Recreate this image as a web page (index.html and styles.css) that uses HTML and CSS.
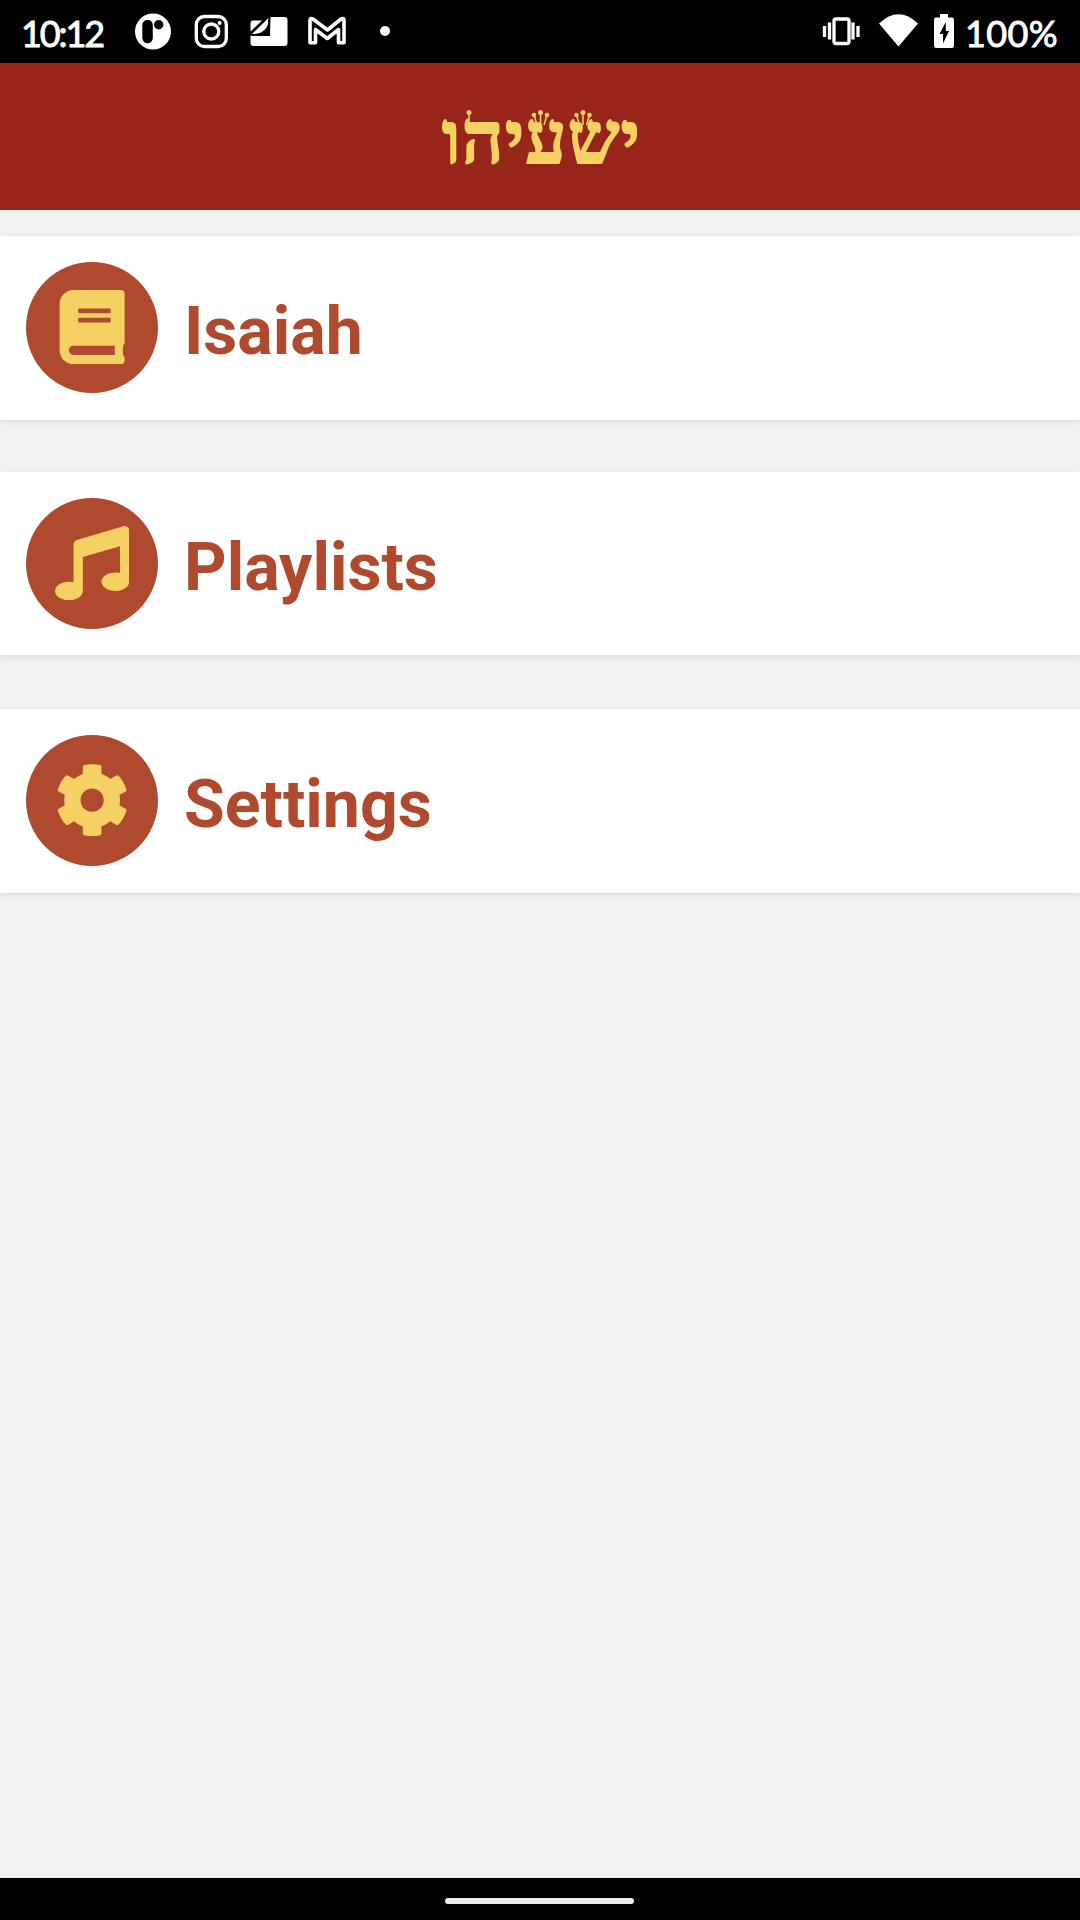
FILE: index.html
```html
<!DOCTYPE html>
<html lang="en">
<head>
<meta charset="utf-8">
<title>Isaiah</title>
<link rel="stylesheet" href="styles.css">
</head>
<body>
<div class="status">
  <span class="clock">10:12</span>
  <svg class="notifications" width="270" height="63" viewBox="0 0 270 63">
    <path fill="#fff" fill-rule="evenodd" d="M23 13.500a18 18 0 1 1 0 36a18 18 0 1 1 0-36zM17.300 20a5 5 0 0 0-5 5v13a5 5 0 0 0 10.500 0v-13a5 5 0 0 0-5.500-5zM28.700 20a4.700 4.700 0 1 0 0 9.400a4.700 4.700 0 1 0 0-9.400z"/>
    <g fill="none" stroke="#fff" stroke-width="3.300">
      <rect x="66.300" y="16.500" width="30" height="30" rx="8"/>
      <circle cx="81.300" cy="31.500" r="7.500"/>
    </g>
    <circle cx="89.600" cy="23" r="2" fill="#fff"/>
    <path fill="#fff" d="M140.500 17h14q3 0 3 3v23q0 3-3 3h-31q-3 0-3-3v-7.200h19.500z"/>
    <path fill="#fff" d="M120.500 31.500v-8.500q0-2.500 2.500-2.500h9z"/>
    <path fill="#fff" d="M122 34L138.500 18q.5 10.500-7.500 14.500-3.500 1.500-9 1.500z"/>
    <path fill="#000" d="M138 20q1.500 9-6 12.800-3 1.400-8.500 1.700l-1.500 1.500h18V19z"/>
    <path fill="none" stroke="#fff" stroke-width="3.600" stroke-linejoin="round" d="M180 42.700V20.500q0-3 3-1.500l14.500 11L211 19q3-1.500 3 1.500v22.200h-5.500V29.500L197.300 38.500L185.500 29.500v13.200z"/>
    <circle cx="255" cy="31" r="5" fill="#fff"/>
  </svg>
  <svg class="system" width="140" height="63" viewBox="0 0 140 63">
    <rect x="14" y="19" width="15" height="24.500" rx="2" fill="none" stroke="#fff" stroke-width="3.300"/>
    <path stroke="#fff" stroke-width="3.300" d="M4.500 26v11M9.500 22.500v17M33 22.500v17M38 26v11"/>
    <path fill="#fff" d="M59 23.500Q78.500 5 98 23.500L78.500 46.500z"/>
    <path fill="#fff" d="M120 14h8v3.500h4q2 0 2 2V46q0 2-2 2h-16q-2 0-2-2V19.500q0-2 2-2h4z"/>
    <path fill="#000" d="M125.800 22L119.500 34H123V43.500L129 31h-3.200z"/>
  </svg>
  <span class="level">100%</span>
</div>
<header class="header">
  <h1 class="title" lang="he" dir="rtl">ישעיהו</h1>
  <svg class="crowns" width="220" height="90" viewBox="430 95 220 90">
    <path fill="none" stroke="#f4d162" stroke-width="1.500" d="M469 113v12M534 115l3 10M540.500 112v13M547 115l-3 10M576.500 115l3 10M583 112v13M589.500 115l-3 10"/>
    <g fill="#f4d162">
      <circle cx="469" cy="112.500" r="2.500"/>
      <circle cx="534" cy="115" r="2.300"/><circle cx="540.500" cy="112.500" r="2.500"/><circle cx="547" cy="115" r="2.300"/>
      <circle cx="576.500" cy="115" r="2.300"/><circle cx="583" cy="112.500" r="2.500"/><circle cx="589.500" cy="115" r="2.300"/>
    </g>
  </svg>
</header>
<main class="menu">
  <a class="item">
    <span class="badge"><svg class="icon" viewBox="-32 0 512 512"><path d="M448 360V24c0-13.300-10.700-24-24-24H96C43 0 0 43 0 96v320c0 53 43 96 96 96h328c13.300 0 24-10.700 24-24v-16c0-7.500-3.500-14.300-8.900-18.700-4.200-15.400-4.200-59.300 0-74.700 5.400-4.300 8.900-11.100 8.900-18.600zM128 134c0-3.300 2.700-6 6-6h212c3.300 0 6 2.700 6 6v20c0 3.300-2.700 6-6 6H134c-3.300 0-6-2.700-6-6v-20zm0 64c0-3.300 2.700-6 6-6h212c3.300 0 6 2.700 6 6v20c0 3.300-2.700 6-6 6H134c-3.300 0-6-2.700-6-6v-20zm253.400 250H96c-17.700 0-32-14.300-32-32 0-17.600 14.400-32 32-32h285.400c-1.900 17.100-1.900 46.900 0 64z"/></svg></span>
    <span class="label">Isaiah</span>
  </a>
  <a class="item item-middle">
    <span class="badge"><svg class="icon" viewBox="0 0 512 512"><path d="M511.990 32.010c0-21.710-21.100-37.010-41.600-30.510L150.400 96c-13.300 4.200-22.400 16.500-22.400 30.500v261.420c-10.050-2.380-20.720-3.920-32-3.920-53.020 0-96 28.650-96 64s42.980 64 96 64 96-28.650 96-64V214.310l256-75.020v184.630c-10.050-2.380-20.720-3.920-32-3.920-53.020 0-96 28.650-96 64s42.980 64 96 64 96-28.650 96-64l-.01-351.990z"/></svg></span>
    <span class="label">Playlists</span>
  </a>
  <a class="item">
    <span class="badge"><svg class="icon" viewBox="0 0 512 512"><path d="M487.400 315.700l-42.600-24.600c4.300-23.200 4.300-47 0-70.200l42.600-24.600c4.900-2.800 7.100-8.600 5.500-14-11.100-35.600-30-67.800-54.700-94.600-3.800-4.100-10-5.100-14.800-2.300L380.800 110c-17.900-15.400-38.500-27.300-60.800-35.100V25.800c0-5.600-3.900-10.500-9.400-11.700-36.700-8.200-74.300-7.800-109.200 0-5.500 1.200-9.400 6.100-9.400 11.700V75c-22.200 7.900-42.800 19.800-60.800 35.100L88.700 85.500c-4.900-2.800-11-1.900-14.800 2.300-24.700 26.700-43.600 58.900-54.700 94.600-1.700 5.400.6 11.200 5.500 14L67.300 221c-4.300 23.200-4.300 47 0 70.200l-42.600 24.600c-4.900 2.800-7.100 8.600-5.500 14 11.100 35.600 30 67.800 54.700 94.600 3.800 4.100 10 5.100 14.800 2.300l42.600-24.600c17.900 15.400 38.500 27.300 60.800 35.100v49.200c0 5.600 3.900 10.500 9.400 11.700 36.700 8.200 74.300 7.800 109.200 0 5.500-1.200 9.400-6.100 9.400-11.700v-49.200c22.200-7.900 42.800-19.800 60.800-35.100l42.600 24.600c4.900 2.800 11 1.900 14.800-2.300 24.700-26.700 43.600-58.900 54.700-94.600 1.500-5.500-.7-11.300-5.600-14.100zM256 336c-44.100 0-80-35.900-80-80s35.900-80 80-80 80 35.900 80 80-35.900 80-80 80z"/></svg></span>
    <span class="label">Settings</span>
  </a>
</main>
<footer class="navbar"><span class="handle"></span></footer>
</body>
</html>
```
FILE: styles.css
```css
* { box-sizing: border-box; }
body {
  margin: 0;
  height: 1920px;
  display: flex;
  flex-direction: column;
  background: #f1f1f1;
  font-family: Roboto, sans-serif;
}
.status {
  height: 63px;
  display: flex;
  align-items: center;
  background: #000;
  color: #fff;
  font-family: Lato, sans-serif;
  font-size: 36px;
  line-height: 63px;
}
.clock {
  width: 130px;
  padding: 3px 0 0 21px;
  letter-spacing: -2.1px;
  -webkit-text-stroke: 0.9px #fff;
}
.system { margin-left: auto; }
.notifications { flex: none; }
.level {
  width: 120px;
  padding: 3px 0 0 5px;
  letter-spacing: 0.4px;
  -webkit-text-stroke: 0.9px #fff;
}
.header {
  position: relative;
  height: 147px;
  display: flex;
  justify-content: center;
  background: #98251a;
}
.title {
  margin: 0;
  padding-left: 3px;
  color: #f4d162;
  font: bold 73px/151px "Liberation Serif", serif;
  letter-spacing: 1.2px;
  -webkit-text-stroke: 1.8px #f4d162;
}
.crowns {
  position: absolute;
  left: 430px;
  top: 32px;
}
.menu {
  flex: 1;
  padding-top: 26px;
}
.item {
  height: 184px;
  display: flex;
  align-items: flex-start;
  gap: 26px;
  padding: 26px;
  background: #fff;
  box-shadow: 0 2px 6px rgba(0, 0, 0, 0.09);
}
.item-middle {
  height: 183px;
  margin: 52px 0 54px;
}
.badge {
  width: 132px;
  height: 131px;
  display: flex;
  align-items: center;
  justify-content: center;
  border-radius: 50%;
  background: #af4a2e;
}
.icon {
  width: 74.250px;
  height: 74.250px;
  margin-bottom: 1px;
  fill: #f4d162;
}
.label {
  padding-top: 31px;
  color: #af4a2e;
  font-size: 66.200px;
  font-weight: 700;
  line-height: 78px;
}
.navbar {
  height: 42px;
  display: flex;
  padding: 20px 0 0 445px;
  background: #000;
}
.handle {
  width: 189px;
  height: 6px;
  border-radius: 3px;
  background: #ebebeb;
}
```
